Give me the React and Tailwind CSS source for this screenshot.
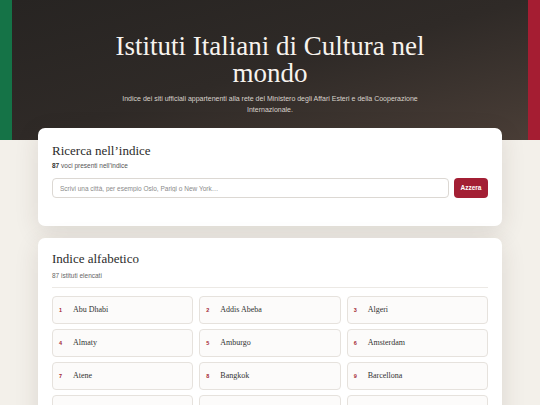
import React from 'react';

const institutes = [
  'Abu Dhabi', 'Addis Abeba', 'Algeri',
  'Almaty', 'Amburgo', 'Amsterdam',
  'Atene', 'Bangkok', 'Barcellona',
  'Beirut', 'Belgrado', 'Berlino',
];

export default function App() {
  return (
    <div className="min-h-[405px] bg-[#f3f0ea] font-['Liberation_Sans',Arial,sans-serif]">
      <header className="flex h-[140px]">
        <div className="w-[12px] bg-[#157347]" />
        <div className="flex-1 bg-gradient-to-br from-[#272422] via-[#2f2a27] to-[#4a3e37] pt-[33px] text-center">
          <h1 className="mx-auto max-w-[340px] text-[27px] leading-[27px] text-[#f7f3ee] font-['Liberation_Serif',serif]">
            Istituti Italiani di Cultura nel mondo
          </h1>
          <p className="mx-auto mt-[6px] max-w-[300px] text-[7px] leading-[11px] text-[#d9d3cc]">
            Indice dei siti ufficiali appartenenti alla rete del Ministero degli Affari Esteri e della Cooperazione Internazionale.
          </p>
        </div>
        <div className="w-[12px] bg-[#a51d32]" />
      </header>

      <main className="mx-[38px] -mt-[12px] flex flex-col gap-[12px]">
        <section className="rounded-[7px] bg-white px-[14px] pt-[15px] pb-[28px] shadow-[0_6px_24px_rgba(60,45,30,0.12)]">
          <h2 className="text-[13px] leading-[16px] text-[#2b2b2b] font-['Liberation_Serif',serif]">Ricerca nell’indice</h2>
          <p className="mt-[2px] text-[6.5px] leading-[9px] text-[#555]">
            <span className="font-bold text-[#333]">87</span> voci presenti nell’indice
          </p>
          <div className="mt-[8px] flex gap-[5px]">
            <input
              className="h-[20px] flex-1 rounded-[4px] border border-[#dcd8d3] px-[7px] text-[6.5px] text-[#333] placeholder:text-[#8a8a8a] outline-none"
              placeholder="Scrivi una città, per esempio Oslo, Parigi o New York…"
            />
            <button className="h-[20px] w-[34px] rounded-[4px] bg-[#a31f34] text-[6.5px] font-bold text-white">Azzera</button>
          </div>
        </section>

        <section className="rounded-[7px] bg-white px-[14px] pt-[13px] pb-[14px] shadow-[0_6px_24px_rgba(60,45,30,0.12)]">
          <h2 className="text-[13px] leading-[16px] text-[#2b2b2b] font-['Liberation_Serif',serif]">Indice alfabetico</h2>
          <p className="mt-[4px] text-[6.5px] leading-[9px] text-[#666]">87 istituti elencati</p>
          <div className="mt-[7px] mb-[8px] h-px bg-[#ece9e5]" />
          <div className="grid grid-cols-3 gap-x-[6px] gap-y-[5px]">
            {institutes.map((name, i) => (
              <div key={name} className="flex h-[28px] items-center rounded-[4px] border border-[#e6e2dd] bg-[#fcfbfa] px-[6px]">
                <span className="w-[14px] text-[5.5px] font-bold text-[#a31f34]">{i + 1}</span>
                <span className="text-[8px] text-[#333] font-['Liberation_Serif',serif]">{name}</span>
              </div>
            ))}
          </div>
        </section>
      </main>
    </div>
  );
}
